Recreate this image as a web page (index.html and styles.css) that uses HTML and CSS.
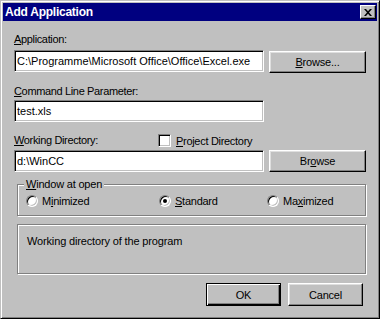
FILE: index.html
```html
<!DOCTYPE html>
<html>
<head>
<meta charset="utf-8">
<link rel="stylesheet" href="styles.css">
</head>
<body>
<div class="window">
  <div class="titlebar">
    <span class="title">Add Application</span>
    <div class="close"><svg width="8" height="7" viewBox="0 0 8 7"><path d="M0 0h2l2 2.2L6 0h2L5 3.5 8 7H6L4 4.8 2 7H0l3-3.5z" fill="#000"/></svg></div>
  </div>
  <div class="content">
    <div class="label l1"><u>A</u>pplication:</div>
    <div class="row r1">
      <div class="field">C:\Programme\Microsoft Office\Office\Excel.exe</div>
      <div class="btn browse"><u>B</u>rowse...</div>
    </div>
    <div class="label l2"><u>C</u>ommand Line Parameter:</div>
    <div class="row">
      <div class="field">test.xls</div>
    </div>
    <div class="row l3">
      <div class="label wd"><u>W</u>orking Directory:</div>
      <div class="check"><span class="cbox"></span><span><u>P</u>roject Directory</span></div>
    </div>
    <div class="row r3">
      <div class="field">d:\WinCC</div>
      <div class="btn browse">Br<u>o</u>wse</div>
    </div>
    <div class="group">
      <span class="legend"><u>W</u>indow at open</span>
      <div class="radio r-min"><span class="rb"></span><span>M<u>i</u>nimized</span></div>
      <div class="radio r-std"><span class="rb on"></span><span><u>S</u>tandard</span></div>
      <div class="radio r-max"><span class="rb"></span><span>Ma<u>x</u>imized</span></div>
    </div>
    <div class="info">Working directory of the program</div>
    <div class="buttons">
      <div class="btn ok">OK</div>
      <div class="btn cancel">Cancel</div>
    </div>
  </div>
</div>
</body>
</html>
```
FILE: styles.css
```css
html, body {
  margin: 0;
  padding: 0;
  background: #c0c0c0;
}
.window {
  width: 380px;
  height: 319px;
  box-sizing: border-box;
  background: #c0c0c0;
  border: 1px solid;
  border-color: #c0c0c0 #000 #000 #c0c0c0;
  box-shadow: inset 1px 1px #fff, inset -1px -1px #808080;
  padding: 2px;
  display: flex;
  flex-direction: column;
  font-family: "Liberation Sans", Arial, sans-serif;
  font-size: 11px;
  color: #000;
}
.titlebar {
  height: 18px;
  background: #000080;
  color: #fff;
  display: flex;
  align-items: center;
  justify-content: space-between;
  padding: 0 1px 0 2px;
  flex: none;
}
.title {
  font-weight: bold;
  font-size: 12px;
  letter-spacing: -0.25px;
}
.close {
  width: 16px;
  height: 14px;
  box-sizing: border-box;
  background: #c0c0c0;
  border: 1px solid;
  border-color: #fff #000 #000 #fff;
  box-shadow: inset -1px -1px #808080;
  display: flex;
  align-items: center;
  justify-content: center;
}
.content {
  padding: 12px 10px 0 11px;
  display: flex;
  flex-direction: column;
}
.label {
  height: 13px;
  line-height: 13px;
  letter-spacing: -0.35px;
}
u {
  text-decoration: underline;
  text-underline-offset: 1px;
}
.row {
  display: flex;
  align-items: flex-start;
  gap: 5px;
}
.l1 { margin-bottom: 4px; }
.l2 { margin-top: 12px; margin-bottom: 2px; }
.l3 { margin-top: 12px; margin-bottom: 3px; height: 13px; }
.wd { width: 139px; }
.field {
  width: 250px;
  height: 22px;
  box-sizing: border-box;
  background: #fff;
  border: 1px solid;
  border-color: #808080 #fff #fff #808080;
  box-shadow: inset 1px 1px #000, inset -1px -1px #c0c0c0;
  padding: 0 3px 0 2px;
  line-height: 20px;
  letter-spacing: 0;
  white-space: nowrap;
  overflow: hidden;
}
.btn {
  box-sizing: border-box;
  background: #c0c0c0;
  border: 1px solid;
  border-color: #fff #000 #000 #fff;
  box-shadow: inset -1px -1px #808080, inset 1px 1px #dfdfdf;
  display: flex;
  align-items: center;
  justify-content: center;
  letter-spacing: -0.2px;
}
.browse {
  width: 97px;
  height: 22px;
  margin-top: 1px;
}
.r3 .browse { margin-top: 0; }
.check {
  display: flex;
  align-items: center;
  gap: 5px;
  letter-spacing: -0.3px;
  height: 13px;
}
.cbox {
  width: 13px;
  height: 13px;
  box-sizing: border-box;
  background: #fff;
  border: 1px solid;
  border-color: #808080 #fff #fff #808080;
  box-shadow: inset 1px 1px #000, inset -1px -1px #c0c0c0;
}
.group {
  position: relative;
  margin: 12px 0 0 3px;
  width: 349px;
  height: 32px;
  box-sizing: border-box;
  border: 1px solid #808080;
  box-shadow: inset 1px 1px #fff, 1px 1px #fff;
  display: flex;
  align-items: center;
  padding: 2px 0 0 8px;
}
.legend {
  position: absolute;
  left: 6px;
  top: -7px;
  background: #c0c0c0;
  padding: 0 2px 0 2px;
  line-height: 13px;
  letter-spacing: -0.2px;
}
.radio {
  display: flex;
  align-items: center;
  gap: 4px;
  letter-spacing: -0.25px;
}
.r-min { width: 133px; }
.r-std { width: 108px; }
.rb {
  width: 12px;
  height: 12px;
  box-sizing: border-box;
  border-radius: 50%;
  background: #fff;
  border: 1px solid;
  border-color: #808080 #fff #fff #808080;
  box-shadow: inset 1px 1px #000, inset -1px -1px #c0c0c0;
  position: relative;
}
.rb.on::after {
  content: "";
  position: absolute;
  left: 3px;
  top: 3px;
  width: 4px;
  height: 4px;
  border-radius: 50%;
  background: #000;
}
.info {
  margin: 8px 0 0 3px;
  width: 349px;
  height: 50px;
  box-sizing: border-box;
  border: 1px solid #808080;
  box-shadow: inset 1px 1px #fff, 1px 1px #fff;
  padding: 10px 0 0 9px;
  line-height: 13px;
  letter-spacing: -0.15px;
}
.buttons {
  display: flex;
  gap: 7px;
  margin: 9px 0 0 192px;
}
.ok, .cancel {
  width: 75px;
  height: 23px;
}
.ok {
  border: 1px solid #000;
  box-shadow: inset 1px 1px #fff, inset -1px -1px #000, inset -2px -2px #808080;
}
```
